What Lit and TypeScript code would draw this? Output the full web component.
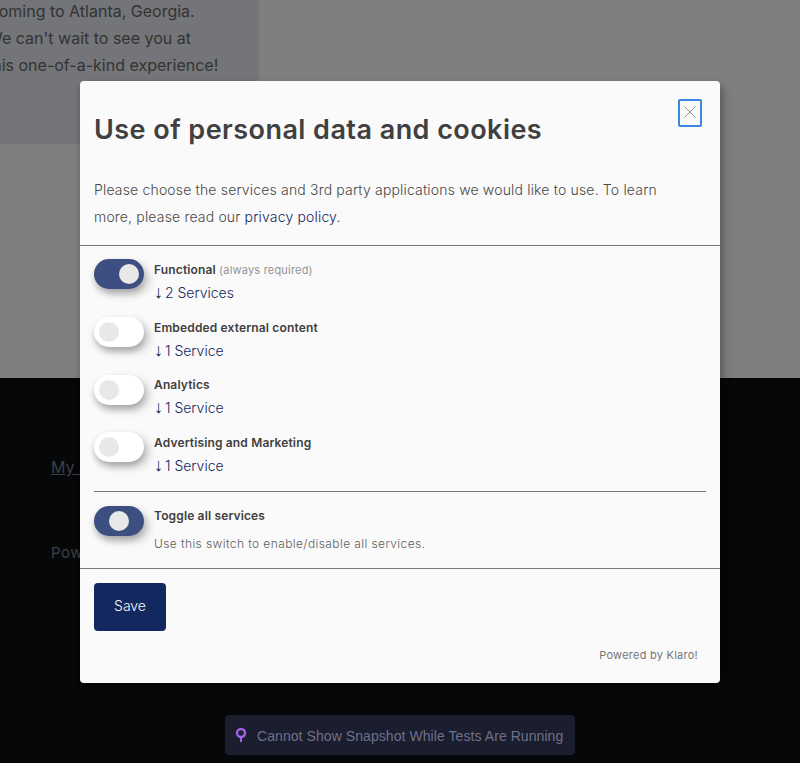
import { LitElement, html, css } from 'lit';
import { customElement } from 'lit/decorators.js';

interface Purpose {
  title: string;
  note?: string;
  count: string;
  on: boolean;
}

const purposes: Purpose[] = [
  { title: 'Functional', note: '(always required)', count: '2 Services', on: true },
  { title: 'Embedded external content', count: '1 Service', on: false },
  { title: 'Analytics', count: '1 Service', on: false },
  { title: 'Advertising and Marketing', count: '1 Service', on: false },
];

@customElement('app-root')
export class AppRoot extends LitElement {
  static override styles = css`
    :host {
      display: block;
      position: relative;
      height: 763px;
      overflow: hidden;
      font-family: Inter, "Open Sans", sans-serif;
      color: #404040;
    }
    .page {
      height: 763px;
      display: flex;
      flex-direction: column;
      background: #fff;
    }
    .top {
      height: 378px;
    }
    .hero {
      width: 259px;
      height: 144px;
      background: #e9ebf0;
      font-size: 16px;
      line-height: 27px;
      color: #666;
      white-space: nowrap;
      overflow: hidden;
    }
    .hero p {
      margin: -2px 0 0 -13px;
    }
    .footer {
      flex: 1;
      background: #0b0e13;
      padding: 79px 51px 0;
      color: #7b7f86;
      font-size: 16px;
    }
    .footer a {
      color: inherit;
      text-decoration: underline;
    }
    .footer p {
      margin: 66px 0 0;
      font-size: 15px;
      letter-spacing: 0.5px;
    }
    .overlay {
      position: absolute;
      inset: 0;
      background: rgba(0, 0, 0, 0.5);
      padding-top: 81px;
      display: flex;
      justify-content: center;
      align-items: flex-start;
    }
    .modal {
      position: relative;
      width: 640px;
      height: 602px;
      background: #fafafa;
      border-radius: 4px;
      box-shadow: 0 4px 6px 0 rgba(0, 0, 0, 0.2), 5px 5px 10px 0 rgba(0, 0, 0, 0.19);
    }
    header {
      padding: 14px 14px 0;
      height: 165px;
      box-sizing: border-box;
      border-bottom: 1px solid #757575;
    }
    h1 {
      margin: 15px 0 0;
      font-size: 27px;
      line-height: 40px;
      font-weight: 600;
      letter-spacing: 0.45px;
      color: #404040;
    }
    .intro {
      margin: 26px 0 0;
      font-size: 14px;
      line-height: 27px;
      letter-spacing: 0.17px;
      font-weight: 350;
      color: #484848;
    }
    a.link {
      color: #152860;
      text-decoration: none;
    }
    .close {
      position: absolute;
      top: 18px;
      right: 18px;
      width: 24px;
      height: 28px;
      padding: 0 0 2px;
      box-sizing: border-box;
      border: 2px solid #3a87e4;
      border-radius: 2px;
      background: none;
      display: flex;
      align-items: center;
      justify-content: center;
    }
    .list {
      padding: 13.49px 14px 1px;
      display: flex;
      flex-direction: column;
    }
    .row {
      display: flex;
      gap: 10px;
      height: 57.67px;
    }
    .row-text {
      margin-top: -0.39px;
    }
    .switch {
      flex: none;
      width: 50px;
      height: 30px;
      border-radius: 15px;
      background: #fff;
      box-shadow: 0 4px 6px 0 rgba(0, 0, 0, 0.2), 5px 5px 10px 0 rgba(0, 0, 0, 0.19);
      position: relative;
    }
    .switch::after {
      content: '';
      position: absolute;
      top: 5px;
      left: 5px;
      width: 20px;
      height: 20px;
      border-radius: 50%;
      background: #e8e8e8;
    }
    .switch.on {
      background: #3d4f80;
    }
    .switch.on::after {
      left: 25px;
    }
    .switch.all::after {
      left: 15px;
    }
    .title {
      font-size: 12px;
      line-height: 22px;
      font-weight: 600;
      letter-spacing: 0.15px;
      color: #404040;
    }
    .note {
      font-size: 11px;
      font-weight: 400;
      letter-spacing: 0.2px;
      color: #949494;
    }
    .services {
      display: block;
      font-size: 14px;
      font-weight: 350;
      line-height: 24px;
    }
    .arrow {
      font-family: "Liberation Sans", sans-serif;
      font-size: 18px;
      line-height: 0;
      margin-right: -2px;
    }
    .all-row {
      margin: 0 14px;
      padding-top: 14px;
      border-top: 1px solid #757575;
      height: 77px;
      box-sizing: border-box;
      display: flex;
      gap: 10px;
    }
    .all-text {
      margin-top: -1px;
    }
    .hint {
      font-size: 12px;
      line-height: 20px;
      letter-spacing: 0.4px;
      font-weight: 350;
      margin-top: 7px;
      color: #5e5e5e;
    }
    .foot {
      border-top: 1px solid #757575;
      padding: 14px;
    }
    .save {
      display: block;
      width: 72px;
      height: 48px;
      padding: 0 0 3px;
      border: 0;
      border-radius: 4px;
      background: #12285f;
      color: #fafafa;
      font: 350 14px Inter, "Open Sans", sans-serif;
    }
    .powered {
      position: absolute;
      right: 22px;
      bottom: 21px;
      font-size: 11px;
      letter-spacing: 0.25px;
      color: #757575;
      text-decoration: none;
    }
    .badge {
      position: absolute;
      left: 225px;
      top: 715px;
      width: 350px;
      height: 40px;
      box-sizing: border-box;
      background: #1b1e2e;
      border-radius: 4px;
      display: flex;
      align-items: center;
      padding: 2px 0 0 10px;
      gap: 10px;
      font: 14px "Liberation Sans", Arial, sans-serif;
      letter-spacing: 0.07px;
      color: #70708a;
    }
    .badge svg {
      margin-top: -3px;
    }
  `;

  override render() {
    return html`
      <div class="page">
        <div class="top">
          <div class="hero">
            <p>
              Coming to Atlanta, Georgia.<br />
              We can't wait to see you at<br />
              this one-of-a-kind experience!
            </p>
          </div>
        </div>
        <div class="footer">
          <a href="#">My Account</a>
          <p>Powered by</p>
        </div>
      </div>
      <div class="overlay">
        <div class="modal">
          <header>
            <button class="close" aria-label="Close">
              <svg width="12" height="12" viewBox="0 0 12 12">
                <path d="M0.5 0.5 L11.5 11.5 M11.5 0.5 L0.5 11.5" stroke="#999" stroke-width="1" fill="none"></path>
              </svg>
            </button>
            <h1>Use of personal data and cookies</h1>
            <p class="intro">
              Please choose the services and 3rd party applications we would like to use. To learn<br />
              more, please read our <a class="link" href="#">privacy policy</a>.
            </p>
          </header>
          <div class="list">
            ${purposes.map(
              (p) => html`
                <div class="row">
                  <div class="switch ${p.on ? 'on' : ''}"></div>
                  <div class="row-text">
                    <div class="title">
                      ${p.title} ${p.note ? html`<span class="note">${p.note}</span>` : ''}
                    </div>
                    <a class="link services" href="#"><span class="arrow">↓</span> ${p.count}</a>
                  </div>
                </div>
              `
            )}
          </div>
          <div class="all-row">
            <div class="switch on all"></div>
            <div class="all-text">
              <div class="title">Toggle all services</div>
              <div class="hint">Use this switch to enable/disable all services.</div>
            </div>
          </div>
          <div class="foot">
            <button class="save">Save</button>
          </div>
          <a class="powered" href="#">Powered by Klaro!</a>
        </div>
      </div>
      <div class="badge">
        <svg width="12" height="16" viewBox="0 0 12 16">
          <circle cx="6" cy="6" r="4" fill="none" stroke="#a55fe8" stroke-width="2.4"></circle>
          <path d="M6 10 V15" stroke="#a55fe8" stroke-width="2"></path>
        </svg>
        <span>Cannot Show Snapshot While Tests Are Running</span>
      </div>
    `;
  }
}

declare global {
  interface HTMLElementTagNameMap {
    'app-root': AppRoot;
  }
}
